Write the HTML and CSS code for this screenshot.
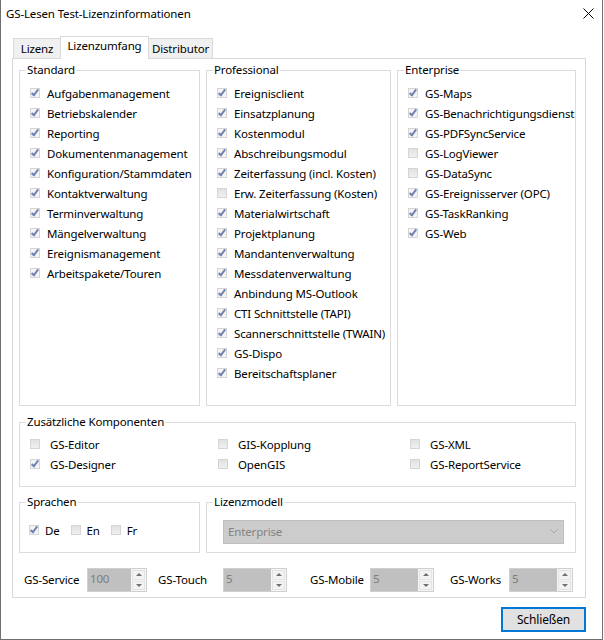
FILE: index.html
```html
<!DOCTYPE html>
<html lang="de">
<head>
    <meta charset="UTF-8">
    <title>GS-Lesen Test-Lizenzinformationen</title>
    <link rel="stylesheet" href="styles.css">
</head>
<body>
    <div class="window">
        <div class="titlebar">
            <span class="title">GS-Lesen Test-Lizenzinformationen</span>
            <svg class="close" width="11" height="11" viewBox="0 0 11 11">
                <path d="M0.5 0.5 L10.5 10.5 M10.5 0.5 L0.5 10.5" stroke="#000" stroke-width="1"/>
            </svg>
        </div>

        <div class="content">
            <div class="tabs">
                <div class="tab tab-lizenz">Lizenz</div>
                <div class="tab tab-umfang active">Lizenzumfang</div>
                <div class="tab tab-distributor">Distributor</div>
            </div>

            <div class="panel">
                <div class="editions">
                    <fieldset class="group group-standard">
                        <legend>Standard</legend>
                        <div class="group-body list">
                            <label class="check on"><span class="box"></span>Aufgabenmanagement</label>
                            <label class="check on"><span class="box"></span>Betriebskalender</label>
                            <label class="check on"><span class="box"></span>Reporting</label>
                            <label class="check on"><span class="box"></span>Dokumentenmanagement</label>
                            <label class="check on"><span class="box"></span>Konfiguration/Stammdaten</label>
                            <label class="check on"><span class="box"></span>Kontaktverwaltung</label>
                            <label class="check on"><span class="box"></span>Terminverwaltung</label>
                            <label class="check on"><span class="box"></span>Mängelverwaltung</label>
                            <label class="check on"><span class="box"></span>Ereignismanagement</label>
                            <label class="check on"><span class="box"></span>Arbeitspakete/Touren</label>
                        </div>
                    </fieldset>

                    <fieldset class="group group-professional">
                        <legend>Professional</legend>
                        <div class="group-body list">
                            <label class="check on"><span class="box"></span>Ereignisclient</label>
                            <label class="check on"><span class="box"></span>Einsatzplanung</label>
                            <label class="check on"><span class="box"></span>Kostenmodul</label>
                            <label class="check on"><span class="box"></span>Abschreibungsmodul</label>
                            <label class="check on"><span class="box"></span>Zeiterfassung (incl. Kosten)</label>
                            <label class="check"><span class="box"></span>Erw. Zeiterfassung (Kosten)</label>
                            <label class="check on"><span class="box"></span>Materialwirtschaft</label>
                            <label class="check on"><span class="box"></span>Projektplanung</label>
                            <label class="check on"><span class="box"></span>Mandantenverwaltung</label>
                            <label class="check on"><span class="box"></span>Messdatenverwaltung</label>
                            <label class="check on"><span class="box"></span>Anbindung MS-Outlook</label>
                            <label class="check on"><span class="box"></span>CTI Schnittstelle (TAPI)</label>
                            <label class="check on"><span class="box"></span>Scannerschnittstelle (TWAIN)</label>
                            <label class="check on"><span class="box"></span>GS-Dispo</label>
                            <label class="check on"><span class="box"></span>Bereitschaftsplaner</label>
                        </div>
                    </fieldset>

                    <fieldset class="group group-enterprise">
                        <legend>Enterprise</legend>
                        <div class="group-body list">
                            <label class="check on"><span class="box"></span>GS-Maps</label>
                            <label class="check on"><span class="box"></span>GS-Benachrichtigungsdienst</label>
                            <label class="check on"><span class="box"></span>GS-PDFSyncService</label>
                            <label class="check"><span class="box"></span>GS-LogViewer</label>
                            <label class="check"><span class="box"></span>GS-DataSync</label>
                            <label class="check on"><span class="box"></span>GS-Ereignisserver (OPC)</label>
                            <label class="check on"><span class="box"></span>GS-TaskRanking</label>
                            <label class="check on"><span class="box"></span>GS-Web</label>
                        </div>
                    </fieldset>
                </div>

                <fieldset class="group group-extra">
                    <legend>Zusätzliche Komponenten</legend>
                    <div class="group-body extra-grid">
                        <label class="check wide"><span class="box"></span>GS-Editor</label>
                        <label class="check wide"><span class="box"></span>GIS-Kopplung</label>
                        <label class="check wide"><span class="box"></span>GS-XML</label>
                        <label class="check wide on"><span class="box"></span>GS-Designer</label>
                        <label class="check wide"><span class="box"></span>OpenGIS</label>
                        <label class="check wide"><span class="box"></span>GS-ReportService</label>
                    </div>
                </fieldset>

                <div class="settings">
                    <fieldset class="group group-lang">
                        <legend>Sprachen</legend>
                        <div class="group-body lang-row">
                            <label class="check narrow on"><span class="box"></span>De</label>
                            <label class="check narrow"><span class="box"></span>En</label>
                            <label class="check narrow"><span class="box"></span>Fr</label>
                        </div>
                    </fieldset>

                    <fieldset class="group group-model">
                        <legend>Lizenzmodell</legend>
                        <div class="group-body">
                            <div class="combo">
                                <span>Enterprise</span>
                                <svg width="8" height="5" viewBox="0 0 8 5">
                                    <path d="M0.5 0.5 L4 4 L7.5 0.5" fill="none" stroke="#a6a6a6" stroke-width="1"/>
                                </svg>
                            </div>
                        </div>
                    </fieldset>
                </div>

                <div class="counters">
                    <div class="counter">
                        <span class="counter-label">GS-Service</span>
                        <div class="spin"><span class="spin-value">100</span><span class="spin-buttons"><span class="up"></span><span class="down"></span></span></div>
                    </div>
                    <div class="counter">
                        <span class="counter-label">GS-Touch</span>
                        <div class="spin"><span class="spin-value">5</span><span class="spin-buttons"><span class="up"></span><span class="down"></span></span></div>
                    </div>
                    <div class="counter">
                        <span class="counter-label">GS-Mobile</span>
                        <div class="spin"><span class="spin-value">5</span><span class="spin-buttons"><span class="up"></span><span class="down"></span></span></div>
                    </div>
                    <div class="counter">
                        <span class="counter-label">GS-Works</span>
                        <div class="spin"><span class="spin-value">5</span><span class="spin-buttons"><span class="up"></span><span class="down"></span></span></div>
                    </div>
                </div>
            </div>

            <div class="footer">
                <button class="btn">Schließen</button>
            </div>
        </div>
    </div>
</body>
</html>
```

FILE: styles.css
```css
body {
    margin: 0;
    background: #fff;
    font-family: "Noto Sans", "Open Sans", sans-serif;
    font-size: 11.5px;
    letter-spacing: -0.15px;
    color: #000;
}
.window {
    box-sizing: border-box;
    width: 603px;
    height: 640px;
    border: 1px solid #6f6f6f;
    border-top: none;
    background: #fff;
}

/* title bar */
.titlebar {
    height: 30px;
    display: flex;
    align-items: center;
    justify-content: space-between;
    padding: 0 8px 3px 5px;
    box-sizing: border-box;
}
.close {
    display: block;
}

.content {
    width: 574px;
    margin-left: 11px;
    margin-top: 6px;
}

/* tab strip */
.tabs {
    display: flex;
    align-items: flex-end;
    padding-left: 1px;
    margin-bottom: -1px;
    position: relative;
    z-index: 1;
}
.tab {
    box-sizing: border-box;
    height: 21px;
    line-height: 19px;
    text-align: center;
    background: #f0f0f0;
    border: 1px solid #d9d9d9;
}
.tab-lizenz {
    width: 47px;
    border-right: none;
}
.tab-distributor {
    width: 64px;
    border-left: none;
}
.tab.active {
    width: 89px;
    height: 23px;
    line-height: 18px;
    background: #fff;
    border-bottom: none;
}

.panel {
    box-sizing: border-box;
    height: 540px;
    border: 1px solid #d9d9d9;
    padding: 4px 9px 0 6px;
}

/* group boxes */
.group {
    margin: 0;
    padding: 0;
    border: 1px solid #dcdcdc;
    min-width: 0;
    box-sizing: border-box;
}
.group legend {
    margin-left: 6px;
    padding: 0 1px;
    line-height: 14px;
}
.editions {
    display: flex;
    gap: 6px;
}
.group-standard {
    width: 181px;
    height: 343px;
}
.group-professional {
    width: 185px;
    height: 343px;
}
.group-enterprise {
    width: 179px;
    height: 343px;
}
.list {
    padding: 6px 0 0 10px;
    white-space: nowrap;
}

/* checkboxes (disabled look) */
.check {
    display: flex;
    align-items: center;
    height: 20px;
    gap: 7px;
}
.check.wide {
    gap: 10px;
}
.check.narrow {
    gap: 6px;
}
.box {
    box-sizing: border-box;
    width: 10px;
    height: 10px;
    flex: none;
    border: 1px solid #d5d5d5;
    background: linear-gradient(#e2e2e2, #efefef);
    display: flex;
    align-items: center;
    justify-content: center;
}
.on .box {
    background: #f4f4f4;
}
.on .box::after {
    content: "";
    width: 2px;
    height: 6px;
    border: solid #7282b3;
    border-width: 0 2px 2px 0;
    transform: translate(0, -1px) rotate(38deg);
}

.group-extra {
    margin-top: 9px;
    height: 72px;
}
.extra-grid {
    display: grid;
    grid-template-columns: 188px 192px 1fr;
    padding: 5px 0 0 10px;
}

.settings {
    display: flex;
    gap: 6px;
    margin-top: 8px;
}
.group-lang {
    width: 181px;
    height: 58px;
}
.group-model {
    width: 370px;
    height: 58px;
}
.lang-row {
    display: flex;
    gap: 11px;
    padding: 11px 0 0 9px;
}
.group-model .group-body {
    padding: 11px 11px 0 16px;
}
.combo {
    box-sizing: border-box;
    height: 24px;
    border: 1px solid #bfbfbf;
    background: #cccccc;
    color: #838383;
    display: flex;
    align-items: center;
    justify-content: space-between;
    padding: 0 5px 1px 4px;
}
.combo svg {
    display: block;
}

/* numeric counters */
.counters {
    display: flex;
    margin-top: 15px;
    padding-left: 5px;
}
.counter {
    display: flex;
    align-items: center;
}
.counter-label {
    padding-bottom: 2px;
}
.counter:nth-child(1) .counter-label { width: 63px; }
.counter:nth-child(2) { margin-left: 11px; }
.counter:nth-child(2) .counter-label { width: 65px; }
.counter:nth-child(3) { margin-left: 23px; }
.counter:nth-child(3) .counter-label { width: 60px; }
.counter:nth-child(4) { margin-left: 16px; }
.counter:nth-child(4) .counter-label { width: 59px; }

.spin {
    box-sizing: border-box;
    width: 64px;
    height: 24px;
    display: flex;
    border: 1px solid #cfcfcf;
    background: #f6f6f6;
}
.counter:nth-child(1) .spin {
    width: 60px;
}
.spin-value {
    flex: 1;
    background: #c0c0c0;
    color: #7d7d7d;
    padding-left: 2px;
    line-height: 20px;
}
.spin-buttons {
    width: 15px;
    display: flex;
    flex-direction: column;
}
.spin-buttons span {
    flex: 1;
    margin: 1px 1px 0;
    border: 1px solid #e3e3e3;
    background: #f3f3f3;
    display: flex;
    align-items: center;
    justify-content: center;
}
.spin-buttons span.down {
    margin-bottom: 1px;
}
.up::after {
    content: "";
    border: 3px solid transparent;
    border-top: none;
    border-bottom: 3px solid #707070;
}
.down::after {
    content: "";
    border: 3px solid transparent;
    border-bottom: none;
    border-top: 3px solid #707070;
}

/* dialog button */
.footer {
    display: flex;
    justify-content: flex-end;
    margin-top: 9px;
}
.btn {
    box-sizing: border-box;
    width: 85px;
    height: 25px;
    border: 2px solid #0078d7;
    background: #e1e1e1;
    font-family: inherit;
    font-size: 12px;
    letter-spacing: -0.15px;
    color: #000;
    padding: 0 0 1px;
}
```
